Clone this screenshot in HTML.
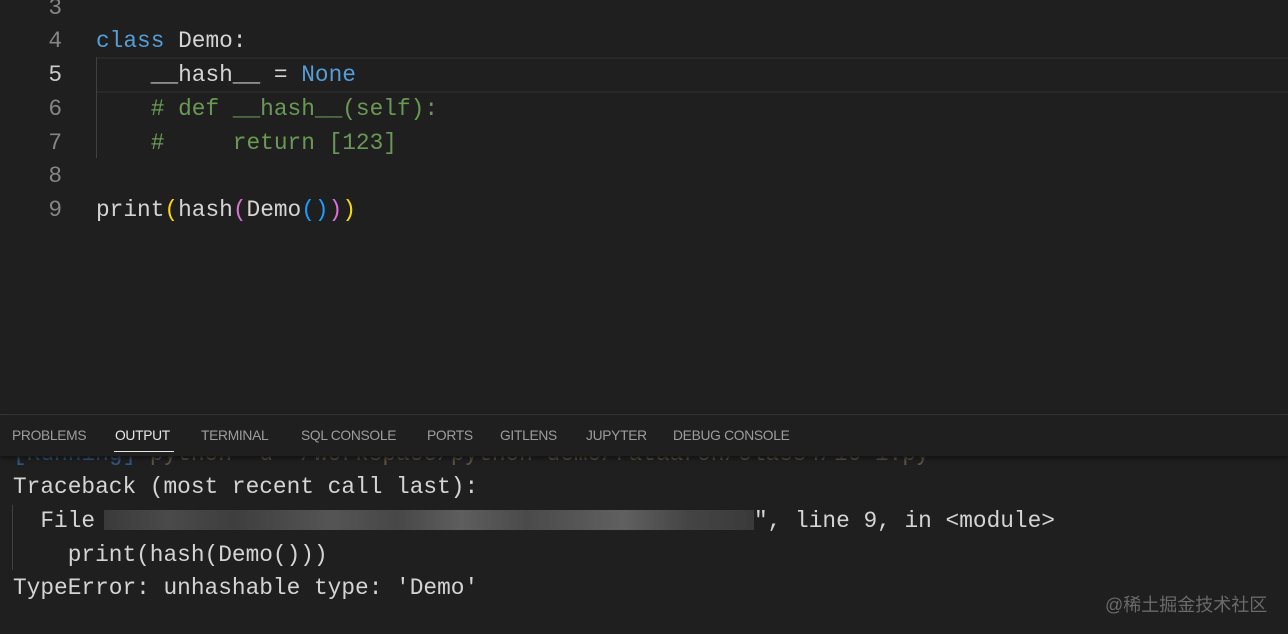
<!DOCTYPE html>
<html><head><meta charset="utf-8"><style>
body{margin:0;width:1288px;height:634px;background:#1f1f1f;overflow:hidden;position:relative;font-family:"Liberation Mono",monospace;}
.m{position:absolute;font-size:22.8px;white-space:pre;line-height:30px;color:#d4d4d4}
.ln{position:absolute;width:62px;text-align:right;font-size:22.8px;color:#858585;font-family:"Liberation Mono",monospace;line-height:30px}
.kw{color:#569cd6}.cm{color:#6a9955}.y{color:#ffd700}.p{color:#da70d6}.b{color:#179fff}
.tab{position:absolute;top:428px;font-family:"Liberation Sans",sans-serif;font-size:13.8px;color:#9d9d9d;letter-spacing:-0.3px}
</style></head><body>
<div style="position:absolute;left:96px;top:57px;width:1192px;height:32px;border-top:2px solid #282828;border-bottom:2px solid #282828"></div>
<div style="position:absolute;left:96px;top:57px;width:1px;height:101px;background:#404040"></div>
<div class="ln" style="top:-7px">3</div>
<div class="ln" style="top:26px">4</div>
<div class="ln" style="top:60px;color:#ccc">5</div>
<div class="ln" style="top:94px">6</div>
<div class="ln" style="top:128px">7</div>
<div class="ln" style="top:161px">8</div>
<div class="ln" style="top:195px">9</div>
<div class="m" style="left:96px;top:26px"><span class="kw">class</span> Demo:</div>
<div class="m" style="left:96px;top:60px">    __hash__ = <span class="kw">None</span></div>
<div class="m cm" style="left:96px;top:94px">    # def __hash__(self):</div>
<div class="m cm" style="left:96px;top:128px">    #     return [123]</div>
<div class="m" style="left:96px;top:195px">print<span class="y">(</span>hash<span class="p">(</span>Demo<span class="b">()</span><span class="p">)</span><span class="y">)</span></div>

<div style="position:absolute;left:0;top:414px;width:1288px;height:1px;background:#3a3a3a"></div>
<div class="m" style="left:13px;top:439px;color:#7a6a50;opacity:.7"><span style="color:#3a6fb0">[Running]</span> python -u "/workspace/python-demo/rataarch/class4/16-1.py</div>
<div style="position:absolute;left:0;top:415px;width:1288px;height:41px;background:#1f1f1f;box-shadow:0 2px 4px #111"></div>
<div class="tab" style="left:12px">PROBLEMS</div>
<div class="tab" style="left:115px;color:#e7e7e7">OUTPUT</div>
<div style="position:absolute;left:114px;top:451px;width:60px;height:1px;background:#e7e7e7"></div>
<div class="tab" style="left:201px">TERMINAL</div>
<div class="tab" style="left:301px">SQL CONSOLE</div>
<div class="tab" style="left:427px">PORTS</div>
<div class="tab" style="left:500px">GITLENS</div>
<div class="tab" style="left:586px">JUPYTER</div>
<div class="tab" style="left:673px">DEBUG CONSOLE</div>

<div style="position:absolute;left:12px;top:505px;width:1px;height:65px;background:#404040"></div>
<div class="m" style="left:13px;top:472px">Traceback (most recent call last):</div>
<div class="m" style="left:13px;top:506px">  File </div>
<div style="position:absolute;left:104px;top:510px;width:650px;height:20px;background:linear-gradient(90deg,#3a3a3a 0,#4a4a4a 10%,#3e3e3e 20%,#555 35%,#474747 45%,#5e5e5e 55%,#4a4a4a 65%,#606060 80%,#444 90%,#3a3a3a 100%)"></div>
<div class="m" style="left:754px;top:506px">", line 9, in &lt;module&gt;</div>
<div class="m" style="left:13px;top:540px">    print(hash(Demo()))</div>
<div class="m" style="left:13px;top:573px">TypeError: unhashable type: 'Demo'</div>
<div style="position:absolute;left:1105px;top:591px;font-family:'Liberation Sans','Noto Sans CJK SC',sans-serif;font-size:18px;color:#6a6a6a">@稀土掘金技术社区</div>
</body></html>
